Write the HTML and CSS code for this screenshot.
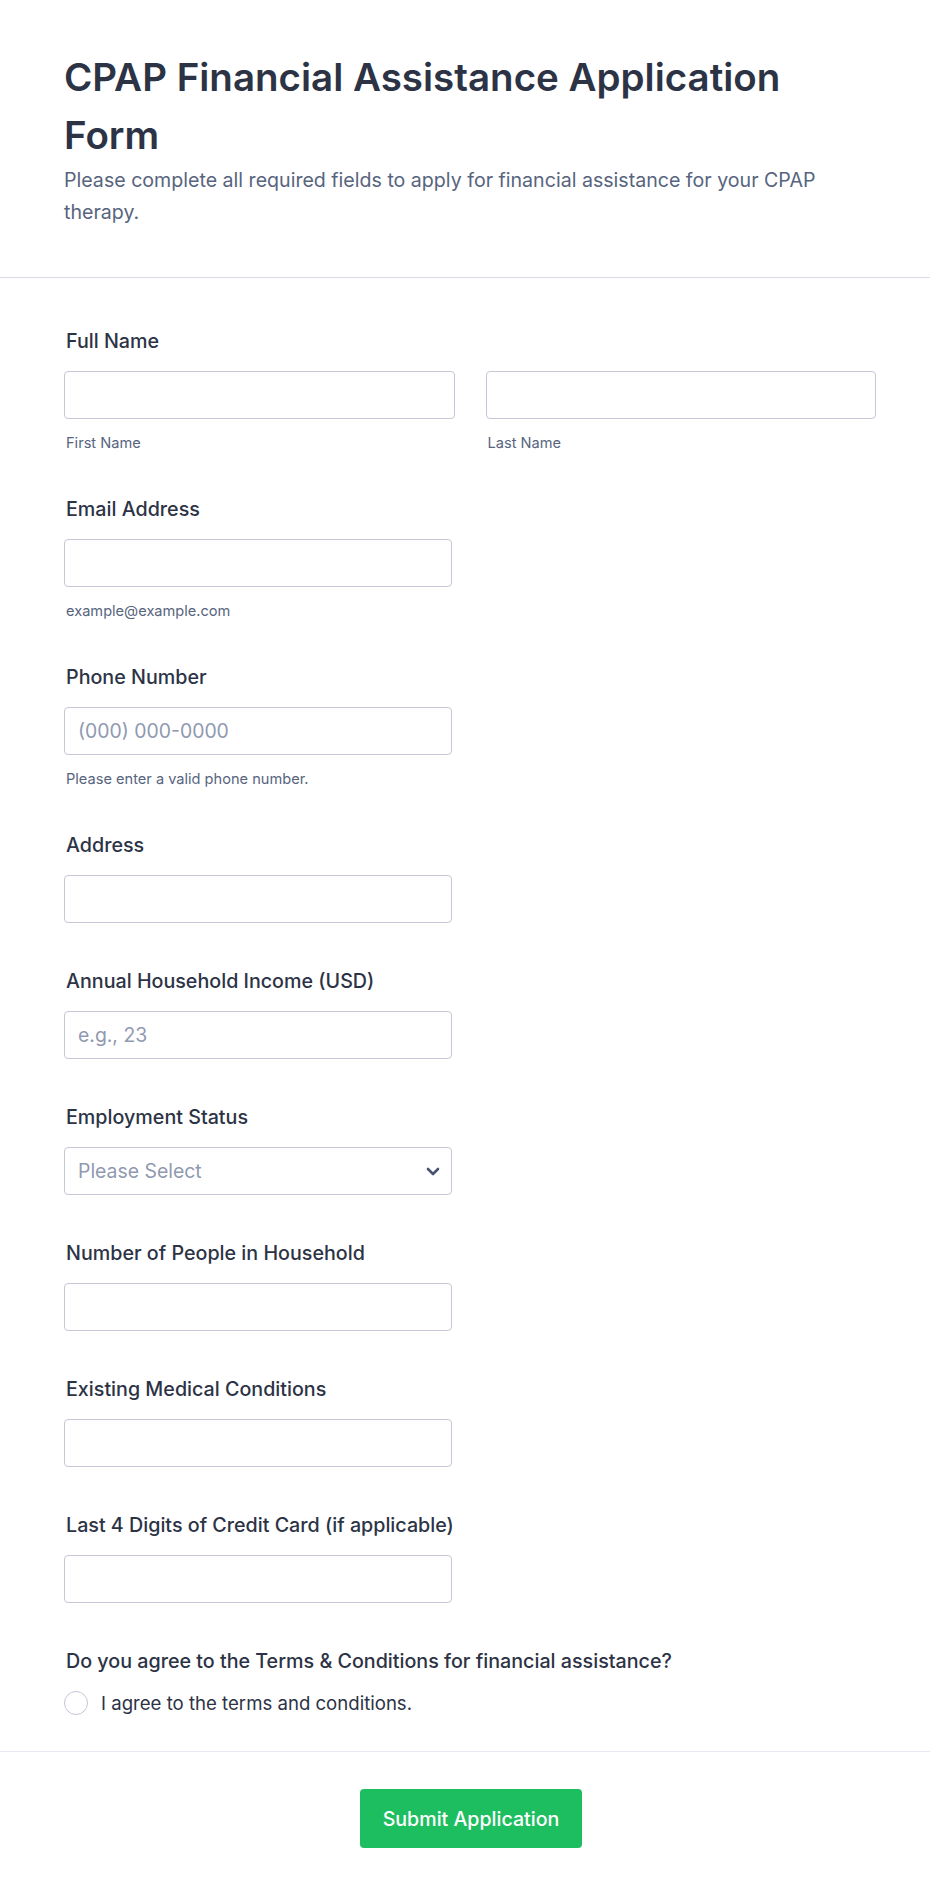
FILE: index.html
```html
<!DOCTYPE html>
<html lang="en">
<head>
<meta charset="utf-8">
<title>CPAP Financial Assistance Application Form</title>
<link rel="stylesheet" href="styles.css">
</head>
<body>
<div class="page">
  <header class="form-header">
    <h1 class="form-title">CPAP Financial Assistance Application Form</h1>
    <p class="form-subtitle">Please complete all required fields to apply for financial assistance for your CPAP therapy.</p>
  </header>

  <form class="form-body">
    <div class="field">
      <label class="field-label">Full Name</label>
      <div class="name-row">
        <div class="name-col">
          <input class="text-input" type="text">
          <span class="sublabel">First Name</span>
        </div>
        <div class="name-col">
          <input class="text-input" type="text">
          <span class="sublabel">Last Name</span>
        </div>
      </div>
    </div>

    <div class="field">
      <label class="field-label">Email Address</label>
      <input class="text-input single" type="email">
      <span class="sublabel">example@example.com</span>
    </div>

    <div class="field">
      <label class="field-label">Phone Number</label>
      <input class="text-input single" type="tel" placeholder="(000) 000-0000">
      <span class="sublabel">Please enter a valid phone number.</span>
    </div>

    <div class="field">
      <label class="field-label">Address</label>
      <input class="text-input single" type="text">
    </div>

    <div class="field">
      <label class="field-label">Annual Household Income (USD)</label>
      <input class="text-input single" type="text" placeholder="e.g., 23">
    </div>

    <div class="field">
      <label class="field-label">Employment Status</label>
      <div class="select-wrap single">
        <select class="text-input select-input">
          <option>Please Select</option>
        </select>
        <svg class="chevron" width="14" height="9" viewBox="0 0 14 9" aria-hidden="true">
          <path d="M2 2 L7 7 L12 2" fill="none" stroke="#4a5470" stroke-width="2.6" stroke-linecap="round" stroke-linejoin="round"/>
        </svg>
      </div>
    </div>

    <div class="field">
      <label class="field-label">Number of People in Household</label>
      <input class="text-input single" type="text">
    </div>

    <div class="field">
      <label class="field-label">Existing Medical Conditions</label>
      <input class="text-input single" type="text">
    </div>

    <div class="field">
      <label class="field-label">Last 4 Digits of Credit Card (if applicable)</label>
      <input class="text-input single" type="text">
    </div>

    <div class="field last">
      <label class="field-label">Do you agree to the Terms &amp; Conditions for financial assistance?</label>
      <label class="radio-row">
        <input class="radio" type="radio" name="agree">
        <span class="radio-text">I agree to the terms and conditions.</span>
      </label>
    </div>
  </form>

  <footer class="form-footer">
    <button class="submit-btn" type="button">Submit Application</button>
  </footer>
</div>
</body>
</html>
```

FILE: styles.css
```css
* {
  box-sizing: border-box;
}

html, body {
  margin: 0;
  padding: 0;
  background: #ffffff;
}

body {
  font-family: Inter, "Noto Sans", "Liberation Sans", sans-serif;
  color: #2c3345;
}

.page {
  width: 930px;
  min-height: 1898px;
  background: #ffffff;
}

.form-header {
  padding: 48px 54px 49px 64px;
  border-bottom: 1px solid #d8dae6;
}

.form-title {
  margin: 0;
  font-size: 38.5px;
  line-height: 58px;
  font-weight: 600;
  color: #2c3345;
}

.form-subtitle {
  margin: 0;
  font-size: 19.6px;
  line-height: 32px;
  font-weight: 400;
  color: #57647e;
}

.form-body {
  padding: 49px 54px 36px 64px;
  display: flex;
  flex-direction: column;
  gap: 44px;
  border-bottom: 1px solid #e6e9f1;
}

.field {
  display: flex;
  flex-direction: column;
  align-items: flex-start;
}

.field-label {
  display: block;
  font-size: 19.7px;
  line-height: 28px;
  font-weight: 500;
  color: #2c3345;
  margin: 0 0 16px 2px;
}

.name-row {
  display: grid;
  grid-template-columns: 1fr 1fr;
  column-gap: 31px;
  width: 100%;
}

.name-col {
  display: flex;
  flex-direction: column;
}

.text-input {
  display: block;
  width: 100%;
  height: 48px;
  border: 1px solid #c5c9d6;
  border-radius: 4px;
  background: #ffffff;
  padding: 0 13px;
  font-family: Inter, "Noto Sans", "Liberation Sans", sans-serif;
  font-size: 19.4px;
  color: #2c3345;
  outline: none;
}

.text-input::placeholder {
  color: #8f99b0;
  opacity: 1;
}

.single {
  width: 388px;
}

.sublabel {
  display: block;
  margin: 16px 0 0 2px;
  font-size: 14.6px;
  line-height: 16px;
  color: #57647e;
}

.select-wrap {
  position: relative;
}

.select-input {
  appearance: none;
  -webkit-appearance: none;
  color: #8f99b0;
  padding-right: 40px;
}

.chevron {
  position: absolute;
  right: 12px;
  top: 20px;
  pointer-events: none;
}

.radio-row {
  display: flex;
  align-items: center;
  gap: 13px;
  height: 24px;
  cursor: pointer;
}

.radio {
  appearance: none;
  -webkit-appearance: none;
  width: 24px;
  height: 24px;
  margin: 0;
  border: 1px solid #c3c6d4;
  border-radius: 50%;
  background: #ffffff;
}

.radio-text {
  font-size: 18.6px;
  line-height: 24px;
  color: #2c3345;
}

.form-footer {
  display: flex;
  justify-content: center;
  padding: 37px 0 50px 0;
}

.submit-btn {
  height: 59px;
  padding: 0 23px;
  margin-left: 12px;
  border: none;
  border-radius: 4px;
  background: #1dbe5f;
  color: #ffffff;
  font-family: Inter, "Noto Sans", "Liberation Sans", sans-serif;
  font-size: 19.6px;
  font-weight: 500;
  cursor: pointer;
}
```
